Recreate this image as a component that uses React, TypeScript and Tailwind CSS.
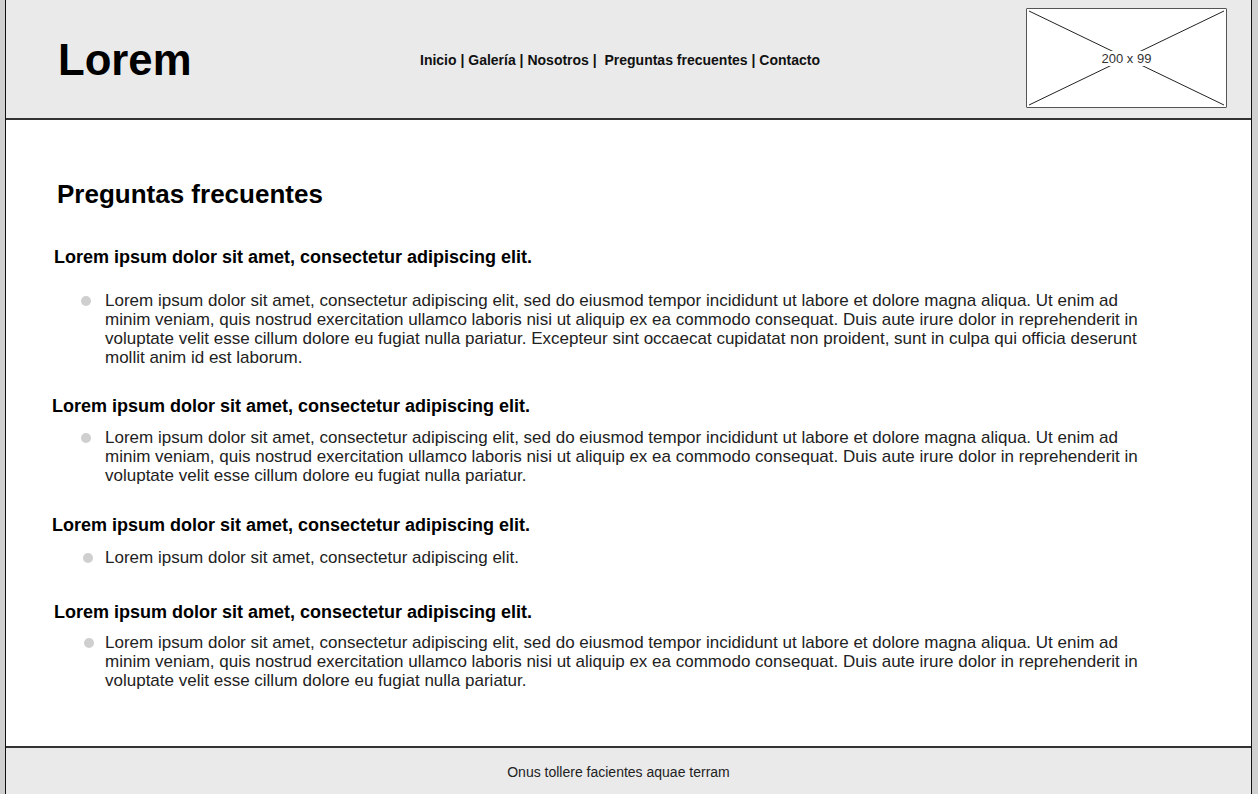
const faqs = [
  {
    q: "Lorem ipsum dolor sit amet, consectetur adipiscing elit.",
    a: "Lorem ipsum dolor sit amet, consectetur adipiscing elit, sed do eiusmod tempor incididunt ut labore et dolore magna aliqua. Ut enim ad minim veniam, quis nostrud exercitation ullamco laboris nisi ut aliquip ex ea commodo consequat. Duis aute irure dolor in reprehenderit in voluptate velit esse cillum dolore eu fugiat nulla pariatur. Excepteur sint occaecat cupidatat non proident, sunt in culpa qui officia deserunt mollit anim id est laborum.",
    qClass: "mt-[38px] ml-[48px]",
    aClass: "mt-[24px]",
    dot: "ml-[75px]",
    gap: "ml-[14px]",
  },
  {
    q: "Lorem ipsum dolor sit amet, consectetur adipiscing elit.",
    a: "Lorem ipsum dolor sit amet, consectetur adipiscing elit, sed do eiusmod tempor incididunt ut labore et dolore magna aliqua. Ut enim ad minim veniam, quis nostrud exercitation ullamco laboris nisi ut aliquip ex ea commodo consequat. Duis aute irure dolor in reprehenderit in voluptate velit esse cillum dolore eu fugiat nulla pariatur.",
    qClass: "mt-[29px] ml-[46px]",
    aClass: "mt-[12px]",
    dot: "ml-[75px]",
    gap: "ml-[14px]",
  },
  {
    q: "Lorem ipsum dolor sit amet, consectetur adipiscing elit.",
    a: "Lorem ipsum dolor sit amet, consectetur adipiscing elit.",
    qClass: "mt-[30px] ml-[46px]",
    aClass: "mt-[13px]",
    dot: "ml-[77px]",
    gap: "ml-[12px]",
  },
  {
    q: "Lorem ipsum dolor sit amet, consectetur adipiscing elit.",
    a: "Lorem ipsum dolor sit amet, consectetur adipiscing elit, sed do eiusmod tempor incididunt ut labore et dolore magna aliqua. Ut enim ad minim veniam, quis nostrud exercitation ullamco laboris nisi ut aliquip ex ea commodo consequat. Duis aute irure dolor in reprehenderit in voluptate velit esse cillum dolore eu fugiat nulla pariatur.",
    qClass: "mt-[35px] ml-[48px]",
    aClass: "mt-[11px]",
    dot: "ml-[78px]",
    gap: "ml-[11px]",
  },
];

function Placeholder() {
  return (
    <div className="relative w-[201px] h-[100px] bg-white border border-[#555] rounded-[1px]">
      <svg className="absolute inset-0" width="199" height="98" viewBox="0 0 199 98">
        <line x1="2" y1="2" x2="197" y2="96" stroke="#222" strokeWidth="1" />
        <line x1="197" y1="2" x2="2" y2="96" stroke="#222" strokeWidth="1" />
      </svg>
      <div className="absolute inset-0 flex items-center justify-center">
        <span className="bg-white px-[2px] text-[13px] leading-[15px] text-[#333]">
          200 x 99
        </span>
      </div>
    </div>
  );
}

export default function App() {
  return (
    <div
      className="flex w-[1258px] h-[794px] bg-[#d0d0d0] overflow-hidden"
      style={{ fontFamily: '"Liberation Sans", Arial, sans-serif' }}
    >
      <div className="ml-[5px] w-[1247px] h-full flex flex-col border-x border-[#111] bg-white">
        <header className="h-[120px] shrink-0 bg-[#eaeaea] border-b-2 border-b-[#333] flex items-start">
          <div className="w-[380px] pl-[52px] pt-[37px]">
            <h1 className="text-[43.7px] leading-[46px] font-bold text-black">Lorem</h1>
          </div>
          <nav className="flex-1 pt-[52px] text-[14px] leading-[16px] font-bold text-[#111] whitespace-pre pl-[34px]">
            Inicio | Galería | Nosotros |  Preguntas frecuentes | Contacto
          </nav>
          <div className="pt-[8px] pr-[24px]">
            <Placeholder />
          </div>
        </header>

        <main className="flex-1 flex flex-col">
          <h2 className="mt-[59px] ml-[51px] text-[26px] leading-[30px] font-bold text-black">
            Preguntas frecuentes
          </h2>
          {faqs.map((f, i) => (
            <section key={i}>
              <h3 className={`${f.qClass} text-[18px] leading-[20px] font-bold text-black`}>{f.q}</h3>
              <div className={`${f.aClass} flex items-start`}>
                <span className={`${f.dot} mt-[5px] w-[10px] h-[10px] rounded-full bg-[#cfcfcf] shrink-0`} />
                <p className={`${f.gap} w-[1050px] text-[17px] leading-[19px] text-[#222]`}>{f.a}</p>
              </div>
            </section>
          ))}
        </main>

        <footer className="h-[48px] shrink-0 bg-[#eaeaea] border-t-2 border-t-[#333] flex items-center justify-center pr-[20px] pt-[2px]">
          <span className="text-[14px] leading-[16px] text-[#222]">Onus tollere facientes aquae terram</span>
        </footer>
      </div>
    </div>
  );
}
